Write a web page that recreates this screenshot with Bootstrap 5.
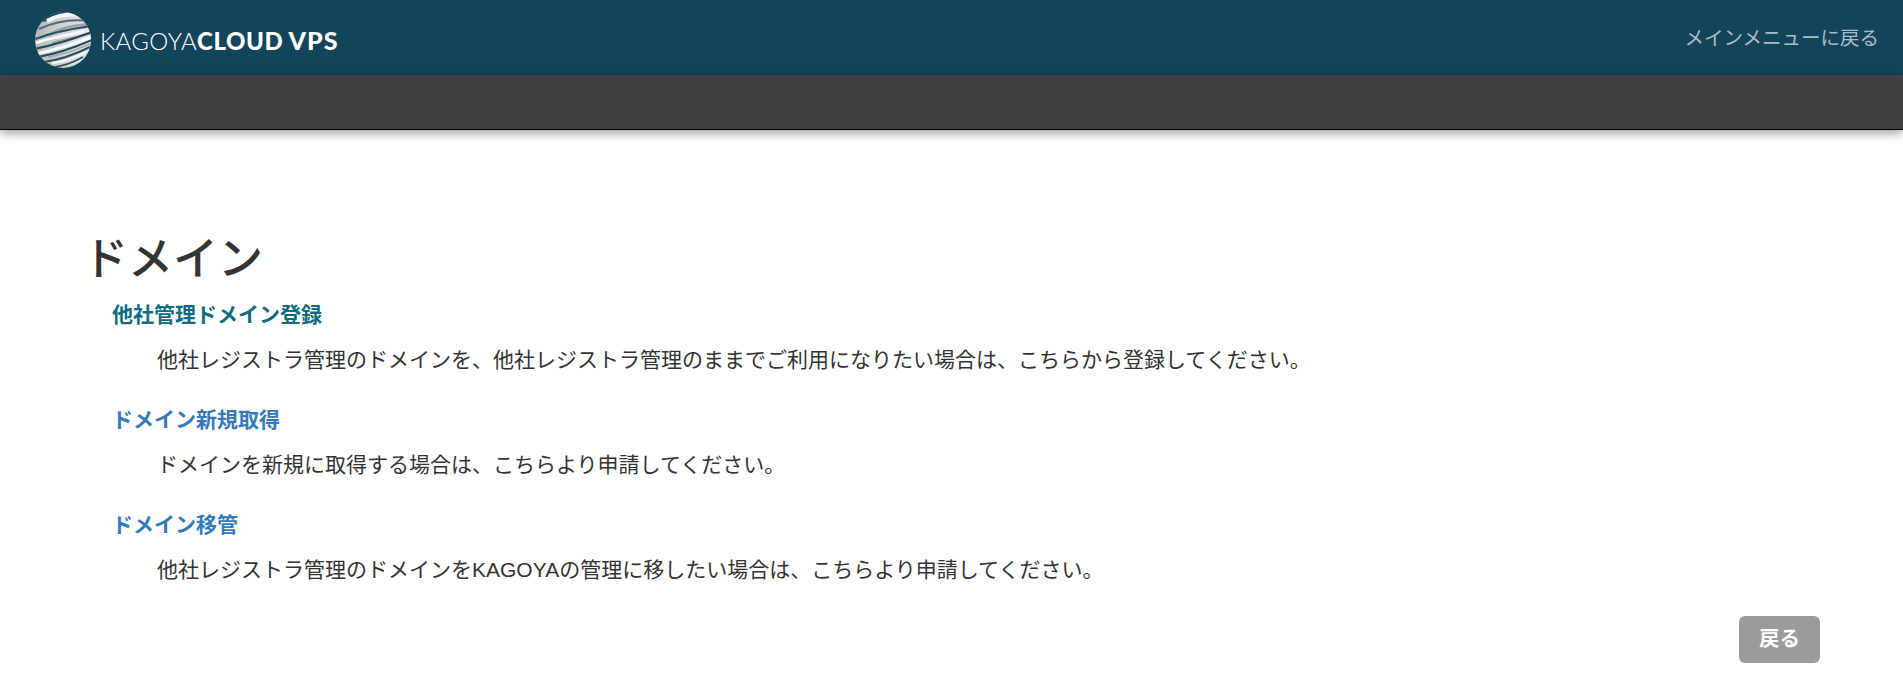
<!DOCTYPE html>
<html lang="ja">
<head>
<meta charset="utf-8">
<title>ドメイン</title>
<link href="https://cdn.jsdelivr.net/npm/bootstrap@5.3.0/dist/css/bootstrap.min.css" rel="stylesheet">
<style>
body{font-family:"Liberation Sans","Noto Sans CJK JP",sans-serif;color:#333;background:#fff;height:673px;overflow:hidden}
.top-bar{height:75px;background:#124559;padding:4px 24px 0 34px}
.brand-txt{font-family:Lato,sans-serif;font-size:24px;line-height:1;color:#fff;text-decoration:none;white-space:nowrap}
.brand-words{margin-top:2px}
.brand-thin{font-weight:300;letter-spacing:.35px}
.brand-bold{font-weight:900;letter-spacing:.6px}
.brand-vps{margin-left:5px;letter-spacing:1px;font-size:25px}
.back-menu{color:#a9bcc6;font-size:19.5px;text-decoration:none;margin-top:-2px}
.sub-bar{height:55px;background:#404040;border-bottom:1px solid #000;box-shadow:0 3px 10px rgba(0,0,0,.4)}
.main-area{padding:105px 83px 0 83px}
.page-title{font-size:45px;font-weight:500;line-height:1.1;margin:0 0 16px;color:#333}
.sect-link{display:block;font-size:21px;font-weight:700;line-height:28px;margin-left:29px;text-decoration:none;color:#337ab7}
.sect-first{color:#0f6b80}
.sect-text{font-size:21px;line-height:28px;margin:17px 0 32px 74px;color:#333}
.back-wrap{margin-top:6px}
.back-btn{width:81px;height:47px;background:#9b9b9b;color:#fff;border:0;border-radius:6px;font-size:20.5px;font-weight:700;padding:0}
</style>
</head>
<body>
<nav class="top-bar d-flex align-items-center justify-content-between">
  <a href="#" class="brand-txt d-flex align-items-center gap-2">
    <svg width="58" height="58" viewBox="0 0 58 58" aria-hidden="true">
      <defs>
        <clipPath id="globe"><circle cx="29" cy="29" r="28"/></clipPath>
        <linearGradient id="silver" x1="0" y1="0" x2="1" y2="0"><stop offset="0" stop-color="#b4b6b7"/><stop offset=".5" stop-color="#d2d3d4"/><stop offset="1" stop-color="#e8e8e8"/></linearGradient>
      </defs>
      <circle cx="29" cy="29" r="28" fill="url(#silver)"/>
      <g clip-path="url(#globe)" fill="none">
        <path d="M0 0H58V4C42 1 28 3 14 10L0 12Z" fill="#124559"/>
        <path d="M13 10C24 4 34 2 48 4" stroke="#f8f8f8" stroke-width="4"/>
        <path d="M5 18C20 11 38 8 55 10" stroke="#4f6b78" stroke-width="2"/>
        <path d="M16 23C28 16 40 14 56 13" stroke="#9c9e9f" stroke-width="2.4"/>
        <path d="M1 28C20 21 42 17 58 15" stroke="#2f5366" stroke-width="2"/>
        <path d="M2 32C18 26 36 24 50 20" stroke="#fbfbfb" stroke-width="2.6"/>
        <path d="M18 32C32 28 44 26 58 22" stroke="#9c9e9f" stroke-width="1.8"/>
        <path d="M0 38C20 34 42 27 58 21" stroke="#1f4a5e" stroke-width="2.2"/>
        <path d="M2 43C20 39 40 33 58 26" stroke="#fafafa" stroke-width="3"/>
        <path d="M4 46C22 43 42 36 58 29" stroke="#1f4a5e" stroke-width="2"/>
        <path d="M14 46C28 44 42 39 56 33" stroke="#a4a6a7" stroke-width="1.8"/>
        <path d="M10 51C24 49 42 43 56 36" stroke="#2c5063" stroke-width="2"/>
        <path d="M18 52C30 51 42 46 52 41" stroke="#f5f5f5" stroke-width="2.4"/>
        <path d="M20 56C30 55 40 51 49 46" stroke="#2c5063" stroke-width="1.6"/>
      </g>
    </svg>
    <span class="brand-words"><span class="brand-thin">KAGOYA</span><span class="brand-bold">CLOUD</span><span class="brand-bold brand-vps">VPS</span></span>
  </a>
  <a href="#" class="back-menu">メインメニューに戻る</a>
</nav>
<div class="sub-bar"></div>
<main class="main-area">
  <h1 class="page-title">ドメイン</h1>
  <a href="#" class="sect-link sect-first">他社管理ドメイン登録</a>
  <p class="sect-text">他社レジストラ管理のドメインを、他社レジストラ管理のままでご利用になりたい場合は、こちらから登録してください。</p>
  <a href="#" class="sect-link">ドメイン新規取得</a>
  <p class="sect-text">ドメインを新規に取得する場合は、こちらより申請してください。</p>
  <a href="#" class="sect-link">ドメイン移管</a>
  <p class="sect-text">他社レジストラ管理のドメインをKAGOYAの管理に移したい場合は、こちらより申請してください。</p>
  <div class="back-wrap d-flex justify-content-end"><button type="button" class="btn back-btn">戻る</button></div>
</main>
<script src="https://cdn.jsdelivr.net/npm/bootstrap@5.3.0/dist/js/bootstrap.bundle.min.js"></script>
</body>
</html>
